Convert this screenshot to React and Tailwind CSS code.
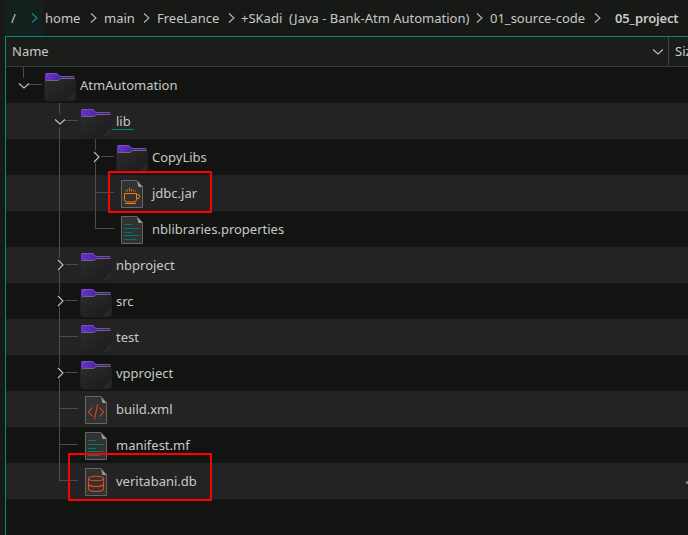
import React from 'react';

const FolderIcon = () => (
  <svg width="32" height="36" viewBox="0 0 32 36" className="block shrink-0">
    <defs>
      <linearGradient id="tab" x1="0" y1="0" x2="1" y2="0">
        <stop offset="0" stopColor="#6a33cc" />
        <stop offset=".5" stopColor="#4d26a2" />
        <stop offset="1" stopColor="#35214f" />
      </linearGradient>
      <linearGradient id="front" x1="0" y1="0" x2="1" y2="1">
        <stop offset="0" stopColor="#2c2c2c" />
        <stop offset="1" stopColor="#1a1a1a" />
      </linearGradient>
    </defs>
    <path d="M1 16V8q0-2 2-2h9q1.500 0 2.500 1.500T17 9h12q2 0 2 2v5z" fill="url(#tab)" />
    <path d="M1.500 8Q2 6.500 3 6.500h9q1 0 2 1.500t3 1.500h12q1.500 0 1.500 1" fill="none" stroke="#8058c8" strokeWidth=".8" />
    <path d="M.5 15.500q0-2 2-2H13q1.500 0 2.500-1t2.500-1h11.500q2 0 2 2V31q0 3-3 3h-25q-3 0-3-3z" fill="url(#front)" stroke="#2a1a36" strokeWidth=".7" />
    <path d="M1.500 14.500q0-1 1-1H13q1.500 0 2.500-1t2.500-1h12.500" fill="none" stroke="#77717d" strokeWidth=".9" />
    <path d="M31 24v7q0 2.500-2.500 2.500H22z" fill="#282828" />
  </svg>
);

const marks = {
  jar: (
    <g fill="none" stroke="#f57c00">
      <path d="M8.500 18.500h12v6q0 2.500-2.500 2.500h-7q-2.500 0-2.500-2.500zM20.500 19.500H22q1.500 0 1.500 2t-1.500 2h-1.500" />
      <path d="M9 28.500h11" />
      <path d="M9.500 15.500v1M11.500 14.500v2M13.500 13v3.500M15.500 14v2.500M17.500 15v1.500M19.500 15.500v1" strokeWidth=".9" />
    </g>
  ),
  lines: (
    <path d="M8 13.500h8M8 17.500h16M8 21.500h8M8 24.500h16M8 28.500h12" stroke="#007a6c" strokeWidth="1" />
  ),
  xml: (
    <path d="M12.500 16.500l-4 4.500 4 4.500M19.500 16.500l4 4.500-4 4.500M17.500 13.500l-3 15" fill="none" stroke="#dd4b1d" strokeWidth="1.100" />
  ),
  db: (
    <g fill="none" stroke="#dd4b1d" strokeWidth="1.100">
      <ellipse cx="16" cy="15.500" rx="7.500" ry="2.200" />
      <path d="M8.500 15.500v11q1 2 7.500 2t7.500-2v-11M8.500 21q1 2.500 7.500 2.500t7.500-2.500" />
    </g>
  ),
};

const FileIcon = ({ kind }) => (
  <svg width="32" height="36" viewBox="0 0 32 36" className="block shrink-0">
    <path d="M5.500 5.500h15.500l5.500 6v21h-21z" fill="#323232" stroke="#656565" />
    <path d="M21 6l5.500 6H23q-1-.5-1-2z" fill="#a0a0a0" />
    {marks[kind]}
  </svg>
);

// One 36px column of the tree: trunk, branch and expander.
const Guide = ({ trunk = 'through', branch, expander }) => (
  <svg width="36" height="36" viewBox="0 0 36 36" className="block shrink-0" fill="none">
    <g stroke="#4b4c4b">
      {trunk === 'through' && !expander && <path d="M17.500 0v36" />}
      {trunk === 'through' && expander && <path d="M17.500 0v11M17.500 24v12" />}
      {trunk === 'end' && <path d={expander ? 'M17.500 0v11' : 'M17.500 0v18'} />}
      {branch && <path d={expander ? 'M23 17.500h13' : 'M17 17.500h19'} />}
    </g>
    {expander === 'open' && <path d="M13 16.500l5 4.500 5-4.500" stroke="#c4c4c4" strokeWidth="1.100" />}
    {expander === 'closed' && <path d="M16 13l5 5-5 5" stroke="#c4c4c4" strokeWidth="1.100" />}
  </svg>
);

const rows = [
  { name: 'AtmAutomation', level: 0, expander: 'open', last: true },
  { name: 'lib', level: 1, expander: 'open', underline: true },
  { name: 'CopyLibs', level: 2, expander: 'closed' },
  { name: 'jdbc.jar', level: 2, kind: 'jar' },
  { name: 'nblibraries.properties', level: 2, kind: 'lines', last: true },
  { name: 'nbproject', level: 1, expander: 'closed' },
  { name: 'src', level: 1, expander: 'closed' },
  { name: 'test', level: 1 },
  { name: 'vpproject', level: 1, expander: 'closed' },
  { name: 'build.xml', level: 1, kind: 'xml' },
  { name: 'manifest.mf', level: 1, kind: 'lines' },
  { name: 'veritabani.db', level: 1, kind: 'db', last: true },
];

const Row = ({ row, striped }) => (
  <div className={`flex h-9 items-center ${striped ? 'bg-[#232323]' : 'bg-[#121411]'}`}>
    {row.level > 0 && <div className="w-9 shrink-0" />}
    {row.level > 1 && <Guide />}
    <Guide trunk={row.last ? 'end' : 'through'} branch expander={row.expander} />
    <div className="ml-0.5 mr-1 shrink-0">{row.kind ? <FileIcon kind={row.kind} /> : <FolderIcon />}</div>
    <span className="relative whitespace-pre leading-9">
      {row.name}
      {row.underline && <span className="absolute -left-1 -right-[3px] top-[26px] h-px bg-[#008a7c]" />}
    </span>
  </div>
);

const Crumb = ({ name, width, chevron = 'text-[#b8b8b8]' }) => (
  <div className={`flex shrink-0 items-center justify-between ${width}`}>
    <span className="whitespace-pre pt-px">{name}</span>
    <svg width="7" height="12" viewBox="0 0 7 12" className={`block ${chevron}`} fill="none">
      <path d="M1 1.500l5 4.500-5 4.500" stroke="currentColor" strokeWidth="1.100" />
    </svg>
  </div>
);

export default function App() {
  return (
    <div className="relative flex h-[535px] w-[688px] flex-col overflow-hidden bg-[#171916] font-['Noto_Sans',sans-serif] text-[13px] text-[#c8c8c8]">
      <nav className="flex h-9 shrink-0 items-stretch pl-1">
        <div className="mr-0.5 flex w-[39px] shrink-0 bg-[#13201d] pl-[7px]">
          <Crumb name="/" width="w-[27px]" chevron="text-[#009a88]" />
        </div>
        <Crumb name="home" width="w-[52px]" />
        <div className="w-[7px] shrink-0" />
        <Crumb name="main" width="w-[46px]" />
        <div className="w-[7px] shrink-0" />
        <Crumb name="FreeLance" width="w-[78px]" />
        <div className="w-[6px] shrink-0" />
        <Crumb name="+SKadi  (Java - Bank-Atm Automation)" width="w-[242px]" />
        <div className="w-[7px] shrink-0" />
        <Crumb name="01_source-code" width="w-[111px]" />
        <span className="ml-[14px] self-center pt-px font-semibold tracking-[-0.15px]">05_project</span>
      </nav>
      <main className="ml-[5px] flex grow flex-col border-l border-t border-[#008a7c] bg-[#121411]">
        <header className="flex h-[30px] shrink-0 items-center border-b border-[#373937] bg-[#1b1d1a]">
          <div className="flex h-full w-[663px] shrink-0 items-center justify-between border-r border-[#414341] pl-1.5 pr-[5px]">
            <span className="pt-px">Name</span>
            <svg width="11" height="7" viewBox="0 0 11 7" className="block" fill="none">
              <path d="M1 1.500l5 4.500 5-4.500" stroke="#c0c0c0" strokeWidth="1.100" />
            </svg>
          </div>
          <span className="pl-1.5 pt-px">Size</span>
        </header>
        {rows.map((row, i) => (
          <Row key={row.name} row={row} striped={i % 2 === 1} />
        ))}
      </main>
      <div className="absolute left-[108px] top-[171px] h-[42px] w-[104px] rounded-[1px] border-2 border-[#fe0000]" />
      <div className="absolute left-[68px] top-[453px] h-[48px] w-[144px] rounded-[1px] border-2 border-[#fe0000]" />
      <div className="absolute left-[686px] top-[481px] h-[3px] w-0.5 bg-[#657f8c]" />
    </div>
  );
}
